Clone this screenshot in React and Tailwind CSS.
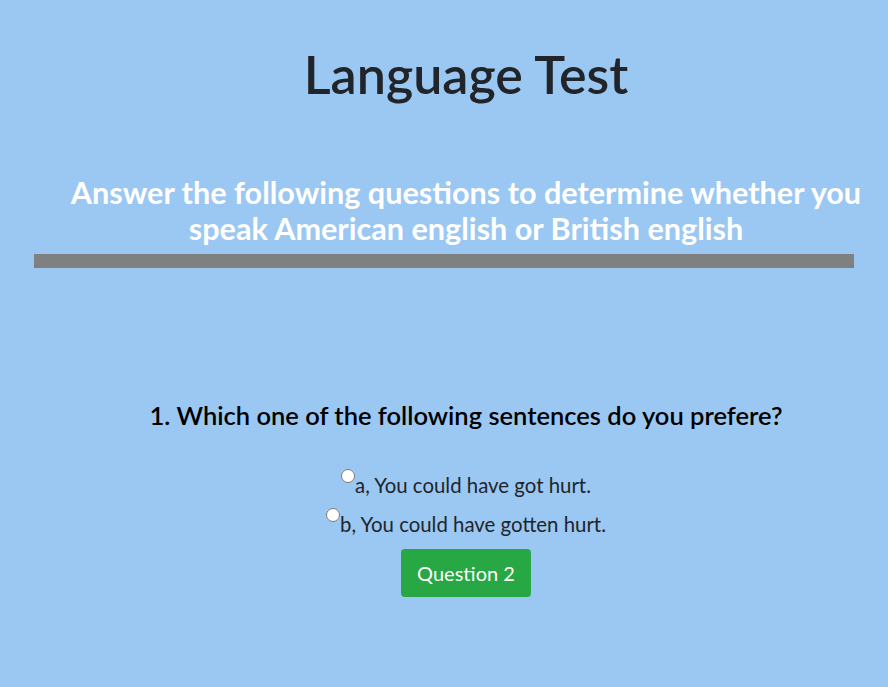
export default function App() {
  return (
    <div className="min-h-[687px] w-full bg-[#9bc8f3] font-['Lato',sans-serif]">
      <div className="pl-[44px] pt-[42px] text-center">
        <h1 className="text-[52px] font-semibold leading-[64px] text-[#212529]">Language Test</h1>
      </div>
      <div className="pl-[44px] pt-[69px] text-center">
        <h2 className="text-[30.6px] font-bold leading-[36px] text-white">
          Answer the following questions to determine whether you speak American english or British english
        </h2>
      </div>
      <div className="ml-[34px] mt-[7px] h-[14px] w-[820px] bg-[#808080]" />
      <div className="pl-[44px] pt-[132px] text-center">
        <h3 className="text-[25.5px] font-semibold leading-[30px] text-black">
          1. Which one of the following sentences do you prefere?
        </h3>
      </div>
      <div className="flex flex-col items-center pl-[44px] pt-[38px] text-[20.4px] leading-[27px] text-[#212529]">
        <label className="flex items-start">
          <input type="radio" name="q1" className="mt-[1px] h-[14px] w-[14px]" />
          <span className="mt-[4px]">a, You could have got hurt.</span>
        </label>
        <label className="mt-[8px] flex items-start">
          <input type="radio" name="q1" className="mt-[1px] h-[14px] w-[14px]" />
          <span className="mt-[4px]">b, You could have gotten hurt.</span>
        </label>
        <button className="mt-[11px] h-[48px] rounded-[4px] bg-[#28a745] px-[16px] text-[20px] text-white">
          Question 2
        </button>
      </div>
    </div>
  );
}
